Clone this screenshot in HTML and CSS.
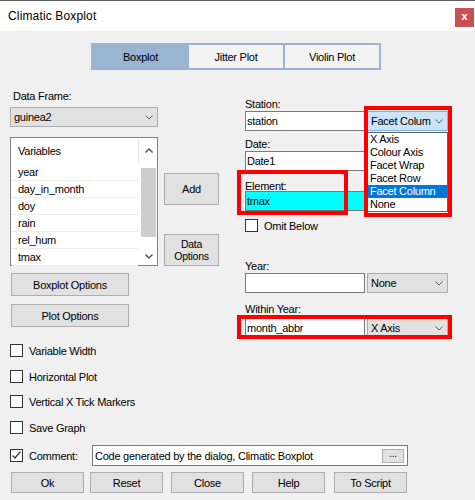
FILE: index.html
```html
<!DOCTYPE html>
<html>
<head>
<meta charset="utf-8">
<link rel="stylesheet" href="styles.css">
</head>
<body>
<div class="window">
  <div class="titlebar">
    <span class="title">Climatic Boxplot</span>
    <div class="close">x</div>
  </div>
  <div class="body">
    <div class="tabs">
      <div class="tab active">Boxplot</div>
      <div class="tab t2">Jitter Plot</div>
      <div class="tab t3">Violin Plot</div>
    </div>
    <div class="content">
      <div class="left">
        <div class="label lbl-df">Data Frame:</div>
        <div class="combo df-combo"><span>guinea2</span><svg class="chev" width="8" height="5" viewBox="0 0 8 5"><polyline points="0.5,0.5 4,4 7.5,0.5"/></svg></div>
        <div class="list-row">
          <div class="listbox">
            <div class="list-main">
              <div class="list-head">Variables</div>
              <div class="item">year</div>
              <div class="item">day_in_month</div>
              <div class="item">doy</div>
              <div class="item">rain</div>
              <div class="item">rel_hum</div>
              <div class="item">tmax</div>
            </div>
            <div class="scrollbar">
              <div class="sb-up"><svg class="arrow" width="8" height="5" viewBox="0 0 8 5"><polyline points="0.5,4.5 4,1 7.5,4.5"/></svg></div>
              <div class="thumb"></div>
              <div class="sb-down"><svg class="arrow" width="8" height="5" viewBox="0 0 8 5"><polyline points="0.5,0.5 4,4 7.5,0.5"/></svg></div>
            </div>
          </div>
          <div class="side-btns">
            <div class="btn add">Add</div>
            <div class="btn data-opt">Data<br>Options</div>
          </div>
        </div>
        <div class="btn opt-btn first">Boxplot Options</div>
        <div class="btn opt-btn second">Plot Options</div>
        <div class="check c1"><span class="box"></span>Variable Width</div>
        <div class="check c2"><span class="box"></span>Horizontal Plot</div>
        <div class="check c3"><span class="box"></span>Vertical X Tick Markers</div>
        <div class="check c4"><span class="box"></span>Save Graph</div>
      </div>
      <div class="right">
        <div class="label lbl-st">Station:</div>
        <div class="row r-st">
          <div class="textbox">station</div>
          <div class="combo open"><span>Facet Colum</span><svg class="chev" width="8" height="5" viewBox="0 0 8 5"><polyline points="0.5,0.5 4,4 7.5,0.5"/></svg></div>
        </div>
        <div class="label lbl-date">Date:</div>
        <div class="row r-date">
          <div class="textbox">Date1</div>
        </div>
        <div class="label lbl-el">Element:</div>
        <div class="row r-el">
          <div class="textbox cyan">tmax</div>
        </div>
        <div class="check omit"><span class="box"></span>Omit Below</div>
        <div class="label lbl-year">Year:</div>
        <div class="row r-year">
          <div class="textbox"></div>
          <div class="combo"><span>None</span><svg class="chev" width="8" height="5" viewBox="0 0 8 5"><polyline points="0.5,0.5 4,4 7.5,0.5"/></svg></div>
        </div>
        <div class="label lbl-within">Within Year:</div>
        <div class="row r-within">
          <div class="textbox">month_abbr</div>
          <div class="combo"><span>X Axis</span><svg class="chev" width="8" height="5" viewBox="0 0 8 5"><polyline points="0.5,0.5 4,4 7.5,0.5"/></svg></div>
        </div>
      </div>
    </div>
    <div class="comment-row">
      <span class="box checked"><svg width="11" height="11" viewBox="0 0 11 11"><polyline points="1.5,5.5 4,8 9.5,1.5"/></svg></span>
      <span class="comment-label">Comment:</span>
      <div class="comment-box"><span>Code generated by the dialog, Climatic Boxplot</span><div class="btn dots">...</div></div>
    </div>
    <div class="bottom-btns">
      <div class="btn bb">Ok</div>
      <div class="btn bb">Reset</div>
      <div class="btn bb">Close</div>
      <div class="btn bb">Help</div>
      <div class="btn bb">To Script</div>
    </div>
  </div>
  <div class="dropdown">
    <div class="opt">X Axis</div>
    <div class="opt">Colour Axis</div>
    <div class="opt">Facet Wrap</div>
    <div class="opt">Facet Row</div>
    <div class="opt sel">Facet Column</div>
    <div class="opt">None</div>
  </div>
  <div class="redbox rb1"></div>
  <div class="redbox rb2"></div>
  <div class="redbox rb3"></div>
</div>
</body>
</html>
```

FILE: styles.css
```css
* { box-sizing: border-box; }
html, body { margin: 0; padding: 0; }
body {
  width: 475px;
  height: 500px;
  overflow: hidden;
  background: #f0f0f0;
  font-family: "Liberation Sans", Arial, sans-serif;
  font-size: 11px;
  letter-spacing: -0.25px;
  color: #000;
}
.window { position: relative; width: 475px; height: 500px; }

.titlebar {
  height: 31px;
  border-top: 1px solid #5c5c5c;
  background: #fff;
  display: flex;
  align-items: flex-start;
}
.title {
  font-size: 12px;
  letter-spacing: 0.15px;
  line-height: 14px;
  margin: 8px 0 0 8px;
}
.close {
  margin: 7px 1px 0 auto;
  width: 19px;
  height: 19px;
  background: #c75050;
  color: #fff;
  font-size: 11px;
  font-weight: bold;
  letter-spacing: 0;
  line-height: 17px;
  text-align: center;
}

.body { height: 469px; display: flex; flex-direction: column; }

.tabs {
  display: flex;
  margin: 12px 0 0 91px;
  width: 290px;
  height: 27px;
  background: #9ab4d2;
  padding: 2px;
}
.tab { display: flex; align-items: center; justify-content: center; }
.tab.active { width: 95px; }
.tab.t2 { width: 94px; margin-left: 1px; background: #f3f3f3; }
.tab.t3 { width: 94px; margin-left: 2px; background: #f3f3f3; }

.content { display: flex; height: 375px; }
.left { width: 209px; margin-left: 10px; display: flex; flex-direction: column; align-items: flex-start; }
.right { width: 207px; margin-left: 26px; display: flex; flex-direction: column; align-items: flex-start; }

.label { height: 11px; line-height: 11px; white-space: nowrap; }
.lbl-df { margin-top: 21px; margin-left: 3px; }

.btn {
  background: #e1e1e1;
  border: 1px solid #adadad;
  display: flex;
  align-items: center;
  justify-content: center;
  text-align: center;
}
.combo {
  background: #e1e1e1;
  border: 1px solid #adadad;
  display: flex;
  align-items: center;
  justify-content: space-between;
  padding: 0 4px 0 3px;
  height: 20px;
  width: 81px;
  margin-left: 2px;
}
.chev, .arrow { display: block; fill: none; stroke: #606060; stroke-width: 1; }
.arrow { stroke-width: 1.4; stroke: #505050; }
.df-combo { margin-top: 5px; width: 148px; margin-left: 0; padding-left: 3px; }

.list-row { display: flex; margin-top: 10px; }
.listbox {
  width: 148px;
  height: 129px;
  border: 1px solid #828282;
  background: #fff;
  display: flex;
}
.list-main { width: 129px; }
.list-head {
  height: 26px;
  line-height: 26px;
  padding-left: 7px;
  position: relative;
}
.list-head::after {
  content: "";
  position: absolute;
  right: 1px;
  top: 2px;
  bottom: 2px;
  width: 1px;
  background: #e5e5e5;
}
.item {
  height: 17px;
  line-height: 16px;
  margin: 0 2px 0 1px;
  padding-left: 6px;
  border-bottom: 1px solid #ececec;
}
.scrollbar { width: 17px; display: flex; flex-direction: column; align-items: center; }
.sb-up { height: 25px; display: flex; align-items: center; justify-content: center; }
.thumb { margin-top: 5px; width: 15px; height: 69px; background: #cdcdcd; }
.sb-down { margin-top: auto; height: 17px; display: flex; align-items: center; justify-content: center; }

.side-btns { display: flex; flex-direction: column; margin-left: 6px; width: 55px; }
.add { margin-top: 36px; height: 32px; }
.data-opt { margin-top: 29px; height: 32px; line-height: 12px; font-size: 10.5px; }

.opt-btn { width: 118px; height: 23px; margin-left: 1px; }
.opt-btn.first { margin-top: 7px; }
.opt-btn.second { margin-top: 8px; }

.check { display: flex; align-items: center; height: 13px; white-space: nowrap; }
.box {
  width: 13px;
  height: 13px;
  border: 1px solid #333;
  background: #fff;
  margin-right: 6px;
  flex: none;
  display: flex;
  align-items: center;
  justify-content: center;
}
.box svg { fill: none; stroke: #333; stroke-width: 1.2; }
.c1 { margin-top: 17px; }
.c2 { margin-top: 13px; }
.c3 { margin-top: 12px; }
.c4 { margin-top: 13px; }

.row { display: flex; }
.textbox {
  width: 120px;
  height: 20px;
  border: 1px solid #7a7a7a;
  background: #fff;
  padding-left: 1px;
  display: flex;
  align-items: center;
  white-space: nowrap;
}
.textbox.cyan { background: #00ffff; }
.combo.open { background: #cce4f7; border-color: #7eb4ea; }

.lbl-st { margin-top: 29px; }
.r-st { margin-top: 1px; }
.lbl-date { margin-top: 8px; }
.r-date { margin-top: 1px; }
.lbl-el { margin-top: 10px; }
.r-el { margin-top: -1px; }
.omit { margin-top: 8px; }
.lbl-year { margin-top: 29px; }
.r-year { margin-top: 1px; }
.lbl-within { margin-top: 11px; }
.r-within { margin-top: 3px; }

.comment-row { display: flex; align-items: center; height: 21px; margin-left: 10px; }
.comment-label { width: 63px; }
.comment-box {
  width: 316px;
  height: 21px;
  border: 1px solid #7a7a7a;
  background: #fff;
  display: flex;
  align-items: center;
  padding-left: 2px;
}
.dots { margin-left: auto; margin-right: 3px; width: 22px; height: 14px; font-size: 10px; line-height: 10px; padding-bottom: 3px; }

.bottom-btns { display: flex; margin-top: 6px; height: 21px; }
.bb { width: 73px; height: 21px; }
.bb:nth-child(1) { margin-left: 11px; }
.bb:nth-child(2) { margin-left: 6px; }
.bb:nth-child(3) { margin-left: 8px; }
.bb:nth-child(4) { margin-left: 8px; }
.bb:nth-child(5) { margin-left: 9px; }

.dropdown {
  position: absolute;
  left: 367px;
  top: 132px;
  width: 81px;
  height: 80px;
  border: 1px solid #646464;
  background: #fff;
}
.opt { height: 13px; line-height: 13px; padding-left: 2px; white-space: nowrap; }
.opt.sel { background: #0078d7; color: #fff; }

.redbox { position: absolute; border: 4px solid #ff0000; }
.rb1 { left: 364px; top: 106px; width: 88px; height: 111px; }
.rb2 { left: 237px; top: 170px; width: 111px; height: 45px; }
.rb3 { left: 237px; top: 315px; width: 215px; height: 24px; }
```
